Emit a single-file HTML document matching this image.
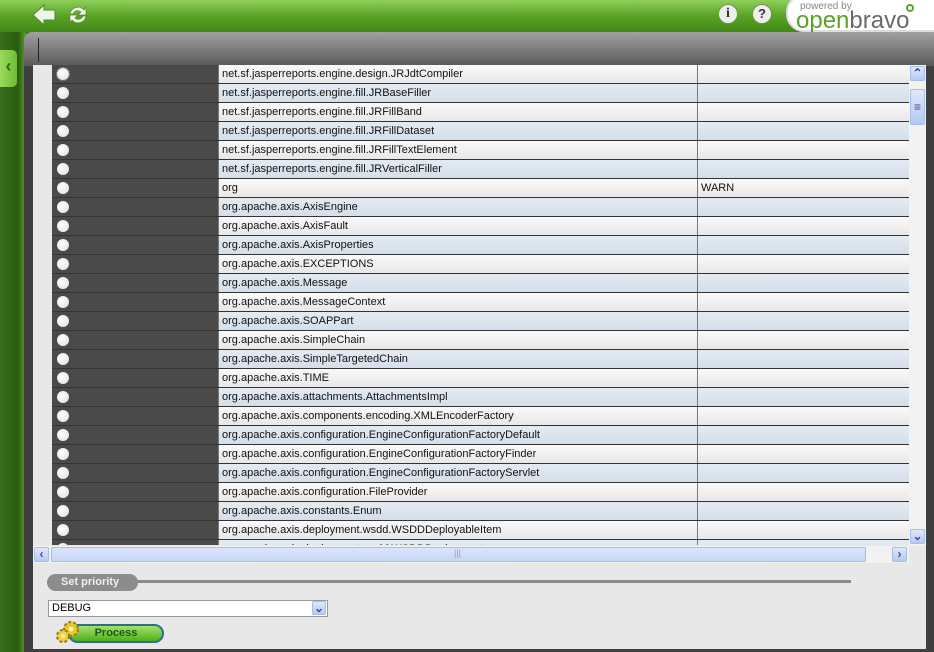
<!DOCTYPE html>
<html><head><style>
*{margin:0;padding:0;box-sizing:border-box}
body{width:934px;height:652px;overflow:hidden;background:#2f6e0e;font-family:"Liberation Sans",Tahoma,sans-serif;font-size:11px;position:relative}
#top{position:absolute;left:0;top:0;width:934px;height:32px;background:linear-gradient(#8fcf5a,#5aa326 50%,#3f8a16)}
#sideL{position:absolute;left:0;top:32px;width:26px;height:620px;background:linear-gradient(90deg,#3a6e1c,#2b5c10 70%,#5aa326)}
#tab{position:absolute;left:0;top:50px;width:17px;height:37px;background:linear-gradient(90deg,#9ada5e,#6fbb35);border-radius:0 5px 5px 0;color:#2d6b10;font-weight:bold;font-size:18px;line-height:32px;text-align:center}
#panel{position:absolute;left:24px;top:32px;width:910px;height:620px;background:#3f3f3f;border-radius:8px 0 0 0}
#bar{position:absolute;left:24px;top:32px;width:910px;height:34px;background:linear-gradient(#a0a0a0,#5a5a5a);border-radius:8px 0 0 0}
#bar i{position:absolute;left:14px;top:6px;width:1px;height:24px;background:#222}
#content{position:absolute;left:33px;top:65px;width:893px;height:584px;background:#e8e8e8}
#grid{position:absolute;left:52px;top:65px;width:857px;height:480px;overflow:hidden}
.r{height:19px;border-bottom:1px solid #333;display:flex;position:relative}
.c1{width:166px;background:#4a4a4a;position:relative}
.c1 b{position:absolute;left:5px;top:3px;width:12px;height:12px;border-radius:50%;background:radial-gradient(circle at 40% 40%,#fff,#d8dde4)}
.c2{width:479px;border-left:1px solid #777;padding-left:3px;line-height:18px;color:#111}
.c3{flex:1;border-left:1px solid #777;padding-left:3px;line-height:18px;color:#111}
.o .c2,.o .c3{background:linear-gradient(#fafafa,#e8e8e8)}
.e .c2,.e .c3{background:linear-gradient(#e4ebf2,#d3dfea)}
#vs{position:absolute;left:909px;top:65px;width:17px;height:481px;background:#f2f2f0}
.btn{position:absolute;width:15px;height:15px;background:linear-gradient(#dfe8fb,#b6c9f3);border:1px solid #a8bde8;border-radius:2px;color:#3a4f8a;font-size:12px;text-align:center;line-height:13px;font-weight:bold}
#hs{position:absolute;left:33px;top:546px;width:876px;height:17px;background:#f2f2f0}
#hthumb{position:absolute;left:18px;top:1px;width:815px;height:15px;background:linear-gradient(#dbe6fb,#c6d6f6);border:1px solid #a8bde8;border-radius:2px}
#sp{position:absolute;left:47px;top:574px;width:91px;height:17px;background:#8c8c8c;border-radius:9px;color:#eee;font-weight:bold;font-size:11px;line-height:17px;padding-left:14px}
#line{position:absolute;left:136px;top:580px;width:715px;height:3px;background:#8c8c8c}
#sel{position:absolute;left:48px;top:600px;width:280px;height:17px;background:#fff;border:1px solid #999;font-size:11px;line-height:15px;padding-left:3px}
#sel .btn{right:1px;top:0;width:14px;height:14px}
#proc{position:absolute;left:68px;top:624px;width:96px;height:19px;border-radius:10px;background:linear-gradient(#a3e26c,#4fae1e);border:2px solid #2e6e8a;color:#1f5a10;font-weight:bold;font-size:11px;line-height:15px;text-align:center}
#gear{position:absolute;left:55px;top:620px;width:26px;height:24px}
#logo{position:absolute;left:786px;top:-6px;width:150px;height:38px;background:#fff;border-radius:18px 0 0 18px;border:2px solid #ddd}
</style></head><body>
<div id="top">
<svg style="position:absolute;left:31px;top:3px" width="26" height="24"><path d="M2 12 L13 2 L13 7 L24 7 L24 17 L13 17 L13 22 Z" fill="#eef5e6" stroke="#4f8a2a"/></svg>
<svg style="position:absolute;left:66px;top:3px" width="24" height="24"><path d="M4 11 A8 8 0 0 1 18 7 L20 4 L20 12 L12 12 L15 9 A5 5 0 0 0 7 11 Z M20 13 A8 8 0 0 1 6 17 L4 20 L4 12 L12 12 L9 15 A5 5 0 0 0 17 13 Z" fill="#f2f8ea" stroke="#4f8a2a" stroke-width=".7"/></svg>
<div style="position:absolute;left:718px;top:4px;width:20px;height:20px;border-radius:50%;background:#eee;border:1px solid #6a9a40;text-align:center;font:bold 14px/18px 'Liberation Serif',serif;color:#333">i</div>
<div style="position:absolute;left:752px;top:4px;width:20px;height:20px;border-radius:50%;background:#eee;border:1px solid #6a9a40;text-align:center;font:bold 13px/18px 'Liberation Sans',sans-serif;color:#333">?</div>
<div id="logo"><div style="position:absolute;left:12px;top:5px;font-size:10px;color:#888">powered by</div><div style="position:absolute;left:8px;top:11px;font-size:24px;letter-spacing:0px;color:#6a6a6a"><span style="color:#5aa326">open</span>bravo</div><div style="position:absolute;left:118px;top:8px;width:8px;height:8px;border:2px solid #5aa326;border-radius:50%"></div></div>
</div>
<div id="sideL"></div>
<div id="tab">&lsaquo;</div>
<div id="panel"></div>
<div id="bar"><i></i></div>
<div id="content"></div>
<div id="grid">
<div class="r o"><div class="c1"><b style="outline:1px dotted #8ab"></b></div><div class="c2">net.sf.jasperreports.engine.design.JRJdtCompiler</div><div class="c3"></div></div>
<div class="r e"><div class="c1"><b></b></div><div class="c2">net.sf.jasperreports.engine.fill.JRBaseFiller</div><div class="c3"></div></div>
<div class="r o"><div class="c1"><b></b></div><div class="c2">net.sf.jasperreports.engine.fill.JRFillBand</div><div class="c3"></div></div>
<div class="r e"><div class="c1"><b></b></div><div class="c2">net.sf.jasperreports.engine.fill.JRFillDataset</div><div class="c3"></div></div>
<div class="r o"><div class="c1"><b></b></div><div class="c2">net.sf.jasperreports.engine.fill.JRFillTextElement</div><div class="c3"></div></div>
<div class="r e"><div class="c1"><b></b></div><div class="c2">net.sf.jasperreports.engine.fill.JRVerticalFiller</div><div class="c3"></div></div>
<div class="r o"><div class="c1"><b></b></div><div class="c2">org</div><div class="c3">WARN</div></div>
<div class="r e"><div class="c1"><b></b></div><div class="c2">org.apache.axis.AxisEngine</div><div class="c3"></div></div>
<div class="r o"><div class="c1"><b></b></div><div class="c2">org.apache.axis.AxisFault</div><div class="c3"></div></div>
<div class="r e"><div class="c1"><b></b></div><div class="c2">org.apache.axis.AxisProperties</div><div class="c3"></div></div>
<div class="r o"><div class="c1"><b></b></div><div class="c2">org.apache.axis.EXCEPTIONS</div><div class="c3"></div></div>
<div class="r e"><div class="c1"><b></b></div><div class="c2">org.apache.axis.Message</div><div class="c3"></div></div>
<div class="r o"><div class="c1"><b></b></div><div class="c2">org.apache.axis.MessageContext</div><div class="c3"></div></div>
<div class="r e"><div class="c1"><b></b></div><div class="c2">org.apache.axis.SOAPPart</div><div class="c3"></div></div>
<div class="r o"><div class="c1"><b></b></div><div class="c2">org.apache.axis.SimpleChain</div><div class="c3"></div></div>
<div class="r e"><div class="c1"><b></b></div><div class="c2">org.apache.axis.SimpleTargetedChain</div><div class="c3"></div></div>
<div class="r o"><div class="c1"><b></b></div><div class="c2">org.apache.axis.TIME</div><div class="c3"></div></div>
<div class="r e"><div class="c1"><b></b></div><div class="c2">org.apache.axis.attachments.AttachmentsImpl</div><div class="c3"></div></div>
<div class="r o"><div class="c1"><b></b></div><div class="c2">org.apache.axis.components.encoding.XMLEncoderFactory</div><div class="c3"></div></div>
<div class="r e"><div class="c1"><b></b></div><div class="c2">org.apache.axis.configuration.EngineConfigurationFactoryDefault</div><div class="c3"></div></div>
<div class="r o"><div class="c1"><b></b></div><div class="c2">org.apache.axis.configuration.EngineConfigurationFactoryFinder</div><div class="c3"></div></div>
<div class="r e"><div class="c1"><b></b></div><div class="c2">org.apache.axis.configuration.EngineConfigurationFactoryServlet</div><div class="c3"></div></div>
<div class="r o"><div class="c1"><b></b></div><div class="c2">org.apache.axis.configuration.FileProvider</div><div class="c3"></div></div>
<div class="r e"><div class="c1"><b></b></div><div class="c2">org.apache.axis.constants.Enum</div><div class="c3"></div></div>
<div class="r o"><div class="c1"><b></b></div><div class="c2">org.apache.axis.deployment.wsdd.WSDDDeployableItem</div><div class="c3"></div></div>
<div class="r e"><div class="c1"><b></b></div><div class="c2">org.apache.axis.deployment.wsdd.WSDDDeployment</div><div class="c3"></div></div>
</div>
<div id="vs"><div class="btn" style="left:1px;top:1px">&#8963;</div><div class="btn" style="left:1px;top:24px;height:36px;line-height:34px;font-weight:normal">&#8801;</div><div class="btn" style="left:1px;top:464px">&#8964;</div></div>
<div id="hs"><div class="btn" style="left:1px;top:1px">&lsaquo;</div><div id="hthumb"><span style="position:absolute;left:402px;top:0;color:#99a;font-size:9px">|||</span></div><div class="btn" style="left:859px;top:1px">&rsaquo;</div></div>
<div id="sp">Set priority</div><div id="line"></div>
<div id="sel">DEBUG<div class="btn">&#8964;</div></div>
<div id="proc">Process</div>
<svg id="gear" viewBox="0 0 26 24"><circle cx="16" cy="9" r="7" fill="#e8c630" stroke="#9a7a10" stroke-dasharray="3 2" stroke-width="2"/><circle cx="16" cy="9" r="2.5" fill="#fff3a0"/><circle cx="8" cy="16" r="6" fill="#f0d040" stroke="#9a7a10" stroke-dasharray="3 2" stroke-width="2"/><circle cx="8" cy="16" r="2" fill="#fff3a0"/></svg>
</body></html>
